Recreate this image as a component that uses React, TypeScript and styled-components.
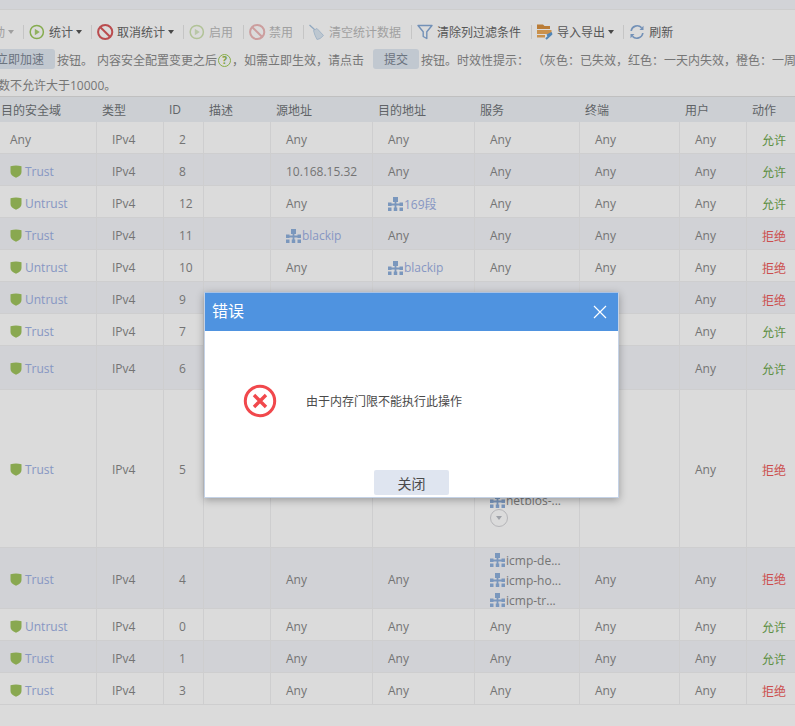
import React from "react";
import styled, { createGlobalStyle } from "styled-components";

const Global = createGlobalStyle`
  html, body { margin: 0; padding: 0; background: #fff; overflow: hidden; }
  body { font-family: "Open Sans", "Noto Sans CJK SC", sans-serif; font-size: 12px; }
`;

const Page = styled.div`
  position: relative;
  width: 795px;
  height: 726px;
  overflow: hidden;
  background: #fff;
  color: #777;
`;
const TopBand = styled.div`
  height: 9px;
  background: #f5f6fb;
  border-bottom: 1px solid #efefef;
`;
const Toolbar = styled.div`
  display: flex;
  align-items: center;
  height: 28px;
  margin-top: 8px;
  white-space: nowrap;
  color: #666;
`;
const Tool = styled.div<{ $off?: boolean; $lead?: boolean }>`
  display: flex;
  align-items: center;
  flex: none;
  gap: 4px;
  padding: 0 10px 0 5px;
  margin-left: ${(p) => (p.$lead ? "-24px" : "0")};
  color: ${(p) => (p.$off ? "#bbb" : "#666")};
  svg { flex: none; overflow: visible; }
`;
const Sep = styled.span`
  flex: none;
  width: 1px;
  height: 14px;
  background: #e6e6e6;
`;
const Caret = styled.i`
  display: block;
  margin-left: -1px;
  margin-right: -1px;
  width: 0;
  height: 0;
  border-left: 3px solid transparent;
  border-right: 3px solid transparent;
  border-top: 4px solid ${(p) => p.color || "#555"};
`;
const Notices = styled.div`
  padding: 3px 0 1px;
  color: #8a8a8a;
  white-space: nowrap;
`;
const NoticeLine = styled.div<{ $shift: number }>`
  display: flex;
  align-items: center;
  height: 20px;
  margin-left: ${(p) => p.$shift}px;
  margin-bottom: 6px;
  &:last-child { margin-bottom: 0; }
`;
const Chip = styled.span`
  flex: none;
  height: 20px;
  padding: 0 11px;
  line-height: 22px;
  border-radius: 3px;
  background: #e1e9f3;
  color: #7d8794;
`;
const Hint = styled.span<{ $gap?: number }>`
  flex: none;
  padding-top: 2px;
  margin-left: ${(p) => p.$gap ?? 0}px;
`;
const Help = styled.span`
  flex: none;
  display: inline-flex;
  align-items: center;
  justify-content: center;
  width: 13px;
  height: 13px;
  margin: 2px 1px 0 1px;
  border: 1.5px solid #9fcb55;
  border-radius: 50%;
  color: #8fba4a;
  font-size: 10px;
  font-weight: 700;
  box-sizing: border-box;
  line-height: 1;
`;
const ChipSlot = styled.div`
  flex: none;
  display: flex;
  margin-left: 9px;
`;
const Table = styled.table`
  width: 804px;
  margin-left: -5px;
  table-layout: fixed;
  border-collapse: separate;
  border-spacing: 0;
  border-top: 1px solid #e0e0e0;
`;
const Head = styled.th`
  height: 25px;
  padding: 0 0 0 5px;
  box-sizing: border-box;
  background: #eef2f6;
  color: #707478;
  font-weight: 400;
  text-align: left;
  &:first-child { padding-left: 6px; }
`;
const Row = styled.tr<{ $alt: boolean }>`
  background: ${(p) => (p.$alt ? "#f4f5fa" : "#ffffff")};
`;
const Cell = styled.td<{ $h: number; $flush?: boolean }>`
  height: ${(p) => p.$h}px;
  padding: ${(p) => (p.$flush ? 0 : p.$h > 32 ? 2 : 4)}px 0 0 15px;
  box-sizing: border-box;
  border-right: 1px solid #f0f0f2;
  border-bottom: 1px solid #f0f0f2;
  white-space: nowrap;
  overflow: hidden;
  color: #888;
`;
const Zone = styled.div`
  display: flex;
  align-items: center;
  gap: 3px;
  color: #9db0e4;
`;
const Obj = styled.div`
  display: flex;
  align-items: center;
  height: 20px;
  gap: 1px;
  color: #9db0e4;
`;
const SvcItem = styled(Obj)`
  box-sizing: border-box;
  padding-top: 4px;
  color: #888;
`;
const Expand = styled.div`
  display: flex;
  align-items: center;
  justify-content: center;
  width: 18px;
  height: 18px;
  margin-bottom: 2px;
  border: 1px solid #d4d4d8;
  border-radius: 50%;
  box-sizing: border-box;
`;
const Action = styled.span<{ $deny: boolean }>`
  color: ${(p) => (p.$deny ? "#ee5a5a" : "#6fa84f")};
`;
const Scrim = styled.div`
  position: absolute;
  inset: 0;
  background: rgba(0, 0, 0, 0.14);
`;
const Modal = styled.div`
  position: absolute;
  left: 204px;
  top: 292px;
  width: 415px;
  height: 206px;
  box-sizing: border-box;
  background: #fff;
  border: 1px solid #c4d2e6;
  border-top-color: #a9c2e4;
  box-shadow: 0 2px 8px rgba(0, 0, 0, 0.3);
  display: flex;
  flex-direction: column;
`;
const ModalHead = styled.div`
  display: flex;
  align-items: center;
  justify-content: space-between;
  height: 38px;
  padding: 0 11px 0 7px;
  background: #4f93e0;
  color: #fff;
  font-size: 16px;
`;
const ModalTitle = styled.span`
  margin-bottom: 4px;
`;
const ModalBody = styled.div`
  display: flex;
  align-items: center;
  gap: 29px;
  height: 139px;
  padding-left: 38px;
  color: #4a4a4a;
`;
const ModalFoot = styled.div`
  display: flex;
  justify-content: center;
`;
const CloseBtn = styled.button`
  width: 75px;
  height: 25px;
  padding: 0;
  border: 0;
  border-radius: 2px;
  background: #dfe5f0;
  color: #4a4a4a;
  font: inherit;
  font-size: 14px;
`;

const Play = ({ off }: { off?: boolean }) => (
  <svg width="16" height="16" viewBox="0 0 16 16">
    <circle cx="7.8" cy="8" r="6.6" fill="none" stroke={off ? "#cfe3b0" : "#9cc95c"} strokeWidth="1.5" />
    <path d="M5.8 4.8 L10.8 8 L5.8 11.2Z" fill={off ? "#d8e8c4" : "#a9d070"} />
  </svg>
);
const Ban = ({ off }: { off?: boolean }) => (
  <svg width="16" height="16" viewBox="0 0 16 16">
    <circle cx="8.2" cy="8" r="7.1" fill="none" stroke={off ? "#eeb8b8" : "#d9595c"} strokeWidth="2" />
    <path d="M3.4 3.2 L13 12.8" stroke={off ? "#eeb8b8" : "#d9595c"} strokeWidth="2" />
  </svg>
);
const Broom = () => (
  <svg width="16" height="16" viewBox="0 0 16 16">
    <path d="M0.5 1 L6 6" stroke="#a9c4e0" strokeWidth="1.3" />
    <path d="M4.5 6.5 L8 4.5 L14.5 11.5 Q11 15.5 8 15.5 Q5.5 11 4.5 6.5Z" fill="#dde8f3" stroke="#b9cfe5" strokeWidth="0.9" />
  </svg>
);
const Funnel = () => (
  <svg width="16" height="16" viewBox="0 0 16 16">
    <path d="M1 1.5 H15 L9.8 7.8 V14.5 L6.2 12.5 V7.8Z" fill="none" stroke="#86a9d6" strokeWidth="1.4" strokeLinejoin="round" />
  </svg>
);
const Folder = () => (
  <svg width="16" height="16" viewBox="0 0 16 16">
    <path d="M0 0.5 H6 L7.5 2 H13 V5 H0Z" fill="#d9913f" />
    <path d="M0 6 H14.5 V10 H0Z" fill="#eba95a" />
    <path d="M0 11 H8 V13.5 H0Z" fill="#eba95a" />
    <path d="M15 9.5 L9 15 M10 11.5 L15 9" stroke="#5c9bd6" strokeWidth="2" />
  </svg>
);
const Refresh = () => (
  <svg width="16" height="16" viewBox="0 0 16 16">
    <path d="M2.2 7 A6 6 0 0 1 12.6 3.8" fill="none" stroke="#86a9d6" strokeWidth="1.7" />
    <path d="M13.8 9 A6 6 0 0 1 3.4 12.2" fill="none" stroke="#86a9d6" strokeWidth="1.7" />
    <path d="M14.5 1.8 V6 H10.5Z" fill="#86a9d6" />
    <path d="M1.5 14.2 V10 H5.5Z" fill="#86a9d6" />
  </svg>
);
const Shield = () => (
  <svg width="12" height="13" viewBox="0 0 12 13">
    <path d="M0.5 1.3 Q6 -0.2 11.5 1.3 V7 Q11.5 10.5 6 12.8 Q0.5 10.5 0.5 7Z" fill="#a0c45e" />
  </svg>
);
const Net = () => (
  <svg width="15" height="14" viewBox="0 0 15 14" fill="#8fb0dc">
    <rect x="5" y="0" width="5" height="5" />
    <rect x="0.5" y="6.5" width="14" height="2" />
    <rect x="0" y="5.5" width="3.5" height="3.5" />
    <rect x="11.5" y="5.5" width="3.5" height="3.5" />
    <rect x="6.6" y="5" width="1.8" height="6" />
    <rect x="0" y="10.5" width="3.5" height="3.5" />
    <rect x="5.75" y="10.5" width="3.5" height="3.5" />
    <rect x="11.5" y="10.5" width="3.5" height="3.5" />
  </svg>
);
const ErrorMark = () => (
  <svg width="34" height="34" viewBox="0 0 34 34">
    <circle cx="17" cy="17" r="14.7" fill="none" stroke="#f1484c" strokeWidth="3" />
    <path d="M11 11 L23 23 M23 11 L11 23" stroke="#f1484c" strokeWidth="3.4" />
  </svg>
);
const Cross = () => (
  <svg width="14" height="14" viewBox="0 0 14 14">
    <path d="M1 1 L13 13 M13 1 L1 13" stroke="#fff" strokeWidth="1.2" />
  </svg>
);

const widths = [102, 67, 40, 67, 102, 102, 105, 100, 67, 52];
const heads = ["目的安全域", "类型", "ID", "描述", "源地址", "目的地址", "服务", "终端", "用户", "动作"];

type Rule = {
  zone?: string;
  id: number;
  h: number;
  src?: React.ReactNode;
  dst?: React.ReactNode;
  svc?: string[];
  more?: boolean;
  deny?: boolean;
};

const net = (name: string) => (
  <Obj>
    <Net />
    <span>{name}</span>
  </Obj>
);

const rules: Rule[] = [
  { id: 2, h: 32 },
  { zone: "Trust", id: 8, h: 32, src: "10.168.15.32" },
  { zone: "Untrust", id: 12, h: 32, dst: net("169段") },
  { zone: "Trust", id: 11, h: 32, src: net("blackip"), deny: true },
  { zone: "Untrust", id: 10, h: 32, dst: net("blackip"), deny: true },
  { zone: "Untrust", id: 9, h: 32, deny: true },
  { zone: "Trust", id: 7, h: 32 },
  { zone: "Trust", id: 6, h: 44 },
  {
    zone: "Trust",
    id: 5,
    h: 158,
    svc: ["netbios-...", "netbios-...", "netbios-...", "netbios-...", "netbios-..."],
    more: true,
    deny: true,
  },
  {
    zone: "Trust",
    id: 4,
    h: 61,
    svc: ["icmp-de...", "icmp-ho...", "icmp-tr..."],
    deny: true,
  },
  { zone: "Untrust", id: 0, h: 32 },
  { zone: "Trust", id: 1, h: 32 },
  { zone: "Trust", id: 3, h: 32, deny: true },
];

export default function App() {
  return (
    <Page>
      <Global />
      <TopBand />
      <Toolbar>
        <Tool $off $lead>
          <span>启动</span>
          <Caret color="#bbb" />
        </Tool>
        <Sep />
        <Tool>
          <Play />
          <span>统计</span>
          <Caret />
        </Tool>
        <Sep />
        <Tool>
          <Ban />
          <span>取消统计</span>
          <Caret />
        </Tool>
        <Sep />
        <Tool $off>
          <Play off />
          <span>启用</span>
        </Tool>
        <Sep />
        <Tool $off>
          <Ban off />
          <span>禁用</span>
        </Tool>
        <Sep />
        <Tool $off>
          <Broom />
          <span>清空统计数据</span>
        </Tool>
        <Sep />
        <Tool>
          <Funnel />
          <span>清除列过滤条件</span>
        </Tool>
        <Sep />
        <Tool>
          <Folder />
          <span>导入导出</span>
          <Caret />
        </Tool>
        <Sep />
        <Tool>
          <Refresh />
          <span>刷新</span>
        </Tool>
      </Toolbar>
      <Notices>
        <NoticeLine $shift={-15}>
          <Chip>立即加速</Chip>
          <Hint $gap={2}>按钮。</Hint>
          <Hint $gap={4}>内容安全配置变更之后</Hint>
          <Help>?</Help>
          <Hint>，如需立即生效，请点击</Hint>
          <ChipSlot>
            <Chip>提交</Chip>
          </ChipSlot>
          <Hint $gap={2}>按钮。时效性提示：</Hint>
          <Hint $gap={3}>（灰色：已失效，红色：一天内失效，橙色：一周内失效）</Hint>
        </NoticeLine>
        <NoticeLine $shift={-2}>数不允许大于10000。</NoticeLine>
      </Notices>
      <Table>
        <colgroup>
          {widths.map((w, i) => (
            <col key={i} width={w} />
          ))}
        </colgroup>
        <thead>
          <tr>
            {heads.map((h) => (
              <Head key={h}>{h}</Head>
            ))}
          </tr>
        </thead>
        <tbody>
          {rules.map((r, i) => (
            <Row key={r.id} $alt={i % 2 === 1}>
              <Cell $h={r.h}>
                {r.zone ? (
                  <Zone>
                    <Shield />
                    {r.zone}
                  </Zone>
                ) : (
                  "Any"
                )}
              </Cell>
              <Cell $h={r.h}>IPv4</Cell>
              <Cell $h={r.h}>{r.id}</Cell>
              <Cell $h={r.h} />
              <Cell $h={r.h}>{r.src ?? "Any"}</Cell>
              <Cell $h={r.h}>{r.dst ?? "Any"}</Cell>
              <Cell $h={r.h} $flush={!!r.svc}>
                {r.svc
                  ? r.svc.map((n, k) => (
                      <SvcItem key={k}>
                        <Net />
                        <span>{n}</span>
                      </SvcItem>
                    ))
                  : "Any"}
                {r.more && (
                  <Expand>
                    <Caret color="#b9bcc4" />
                  </Expand>
                )}
              </Cell>
              <Cell $h={r.h}>Any</Cell>
              <Cell $h={r.h}>Any</Cell>
              <Cell $h={r.h}>
                <Action $deny={!!r.deny}>{r.deny ? "拒绝" : "允许"}</Action>
              </Cell>
            </Row>
          ))}
        </tbody>
      </Table>
      <Scrim />
      <Modal>
        <ModalHead>
          <ModalTitle>错误</ModalTitle>
          <Cross />
        </ModalHead>
        <ModalBody>
          <ErrorMark />
          <span>由于内存门限不能执行此操作</span>
        </ModalBody>
        <ModalFoot>
          <CloseBtn>关闭</CloseBtn>
        </ModalFoot>
      </Modal>
    </Page>
  );
}
